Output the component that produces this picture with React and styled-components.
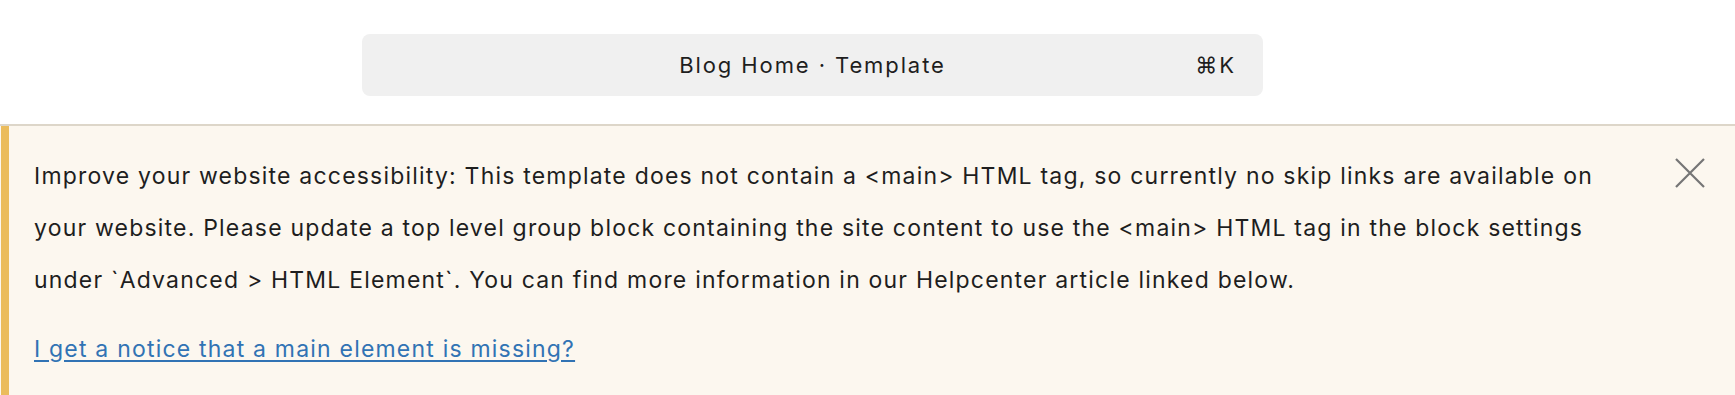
import styled, { createGlobalStyle } from "styled-components";

const GlobalStyle = createGlobalStyle`
  html, body {
    margin: 0;
    padding: 0;
    background: #ffffff;
  }
  body {
    font-family: Inter, "Noto Sans", "Liberation Sans", sans-serif;
    font-variation-settings: "opsz" 14;
    font-optical-sizing: none;
    color: #1e1e1e;
    -webkit-font-smoothing: antialiased;
  }
`;

export default function App() {
  return (
    <Page>
      <GlobalStyle />
      <Header>
        <CommandBar type="button">
          <span />
          <BarTitle>Blog Home · Template</BarTitle>
          <Shortcut>⌘K</Shortcut>
        </CommandBar>
      </Header>

      <Notice>
        <NoticeContent>
          <NoticeText>
            Improve your website accessibility: This template does not contain a &lt;main&gt; HTML tag, so currently no skip links are available on
            <br />
            your website. Please update a top level group block containing the site content to use the &lt;main&gt; HTML tag in the block settings
            <br />
            under `Advanced &gt; HTML Element`. You can find more information in our Helpcenter article linked below.
          </NoticeText>
          <NoticeText>
            <HelpLink href="#">I get a notice that a main element is missing?</HelpLink>
          </NoticeText>
        </NoticeContent>
        <CloseButton type="button" aria-label="Dismiss this notice">
          <svg width="30" height="30" viewBox="0 0 30 30">
            <path d="M1 1 L29 29 M29 1 L1 29" stroke="#757575" strokeWidth="2.2" fill="none" />
          </svg>
        </CloseButton>
      </Notice>
    </Page>
  );
}

const Page = styled.div`
  width: 100%;
  min-height: 395px;
  background: #fcf7ef;
`;

const Header = styled.header`
  display: flex;
  padding: 34px 0 28px 362px;
  background: #ffffff;
  border-bottom: 2px solid #ddd6c9;
`;

const CommandBar = styled.button`
  display: grid;
  grid-template-columns: 1fr auto 1fr;
  align-items: center;
  width: 901px;
  height: 62px;
  padding: 0 29px;
  border: none;
  border-radius: 8px;
  background: #f0f0f0;
  font-family: inherit;
  font-variation-settings: inherit;
  color: #1e1e1e;
  cursor: pointer;
`;

const BarTitle = styled.span`
  font-size: 22px;
  letter-spacing: 1.9px;
`;

const Shortcut = styled.span`
  justify-self: end;
  font-size: 22px;
  letter-spacing: 2px;
  margin-right: -2px;
`;

const Notice = styled.section`
  display: flex;
  align-items: flex-start;
  margin-left: 1px;
  padding: 24px 30px 22px 25px;
  border-left: 8px solid #ebbc5c;
  background: #fcf7ef;
`;

const NoticeContent = styled.div`
  flex: 1;
`;

const NoticeText = styled.p`
  margin: 0 0 17px;
  font-size: 23px;
  line-height: 52px;
  letter-spacing: 1.2px;
  color: #1e1e1e;

  &:last-child {
    margin-bottom: 0;
  }
`;

const HelpLink = styled.a`
  color: #3173b4;
  text-decoration: underline;
  text-underline-offset: 3px;
`;

const CloseButton = styled.button`
  display: flex;
  align-items: center;
  justify-content: center;
  margin-top: 8px;
  padding: 0;
  border: none;
  background: transparent;
  cursor: pointer;
`;
